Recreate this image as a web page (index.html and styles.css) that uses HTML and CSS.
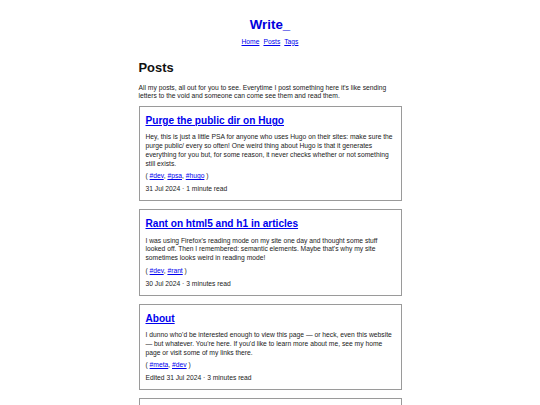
FILE: index.html
```html
<!DOCTYPE html>
<html lang="en">
<head>
<meta charset="utf-8">
<title>Write_</title>
<link rel="stylesheet" href="styles.css">
</head>
<body>
<header class="site-header">
  <a class="site-title" href="#">Write_</a>
  <nav class="site-nav">
    <a href="#">Home</a>
    <a href="#">Posts</a>
    <a href="#">Tags</a>
  </nav>
</header>
<main class="content">
  <h1 class="page-title">Posts</h1>
  <p class="intro">All my posts, all out for you to see. Everytime I post something here it's like sending letters to the void and someone can come see them and read them.</p>

  <article class="card">
    <h2 class="card-title"><a href="#">Purge the public dir on Hugo</a></h2>
    <p class="card-text">Hey, this is just a little PSA for anyone who uses Hugo on their sites: make sure the purge public/ every so often! One weird thing about Hugo is that it generates everything for you but, for some reason, it never checks whether or not something still exists.</p>
    <p class="card-tags">( <a href="#">#dev</a>, <a href="#">#psa</a>, <a href="#">#hugo</a> )</p>
    <p class="card-meta">31 Jul 2024 · 1 minute read</p>
  </article>

  <article class="card">
    <h2 class="card-title"><a href="#">Rant on html5 and h1 in articles</a></h2>
    <p class="card-text">I was using Firefox's reading mode on my site one day and thought some stuff looked off. Then I remembered: semantic elements. Maybe that's why my site sometimes looks weird in reading mode!</p>
    <p class="card-tags">( <a href="#">#dev</a>, <a href="#">#rant</a> )</p>
    <p class="card-meta">30 Jul 2024 · 3 minutes read</p>
  </article>

  <article class="card">
    <h2 class="card-title"><a href="#">About</a></h2>
    <p class="card-text">I dunno who'd be interested enough to view this page — or heck, even this website — but whatever. You're here. If you'd like to learn more about me, see my home page or visit some of my links there.</p>
    <p class="card-tags">( <a href="#">#meta</a>, <a href="#">#dev</a> )</p>
    <p class="card-meta">Edited 31 Jul 2024 · 3 minutes read</p>
  </article>

  <article class="card card-last"></article>
</main>
</body>
</html>
```

FILE: styles.css
```css
html, body {
  margin: 0;
  padding: 0;
  background: #ffffff;
}

body {
  font-family: "Liberation Sans", Arial, sans-serif;
  font-size: 6.72px;
  line-height: 8.7px;
  color: #222222;
}

a {
  color: #0000ee;
}

.site-header {
  display: flex;
  flex-direction: column;
  align-items: center;
  padding-top: 17px;
}

.site-title {
  font-size: 13.3px;
  line-height: 15px;
  font-weight: bold;
  text-decoration: none;
  color: #0000dd;
}

.site-nav {
  display: flex;
  gap: 4px;
  margin-top: 5.7px;
  line-height: 8px;
}

.content {
  width: 263px;
  margin: 0 auto;
}

.page-title {
  font-size: 12.9px;
  line-height: 15px;
  margin: 14.4px 0 8.6px;
  color: #111111;
}

.intro {
  margin: 0 0 5px;
}

.card {
  border: 1px solid #9a9a9a;
  padding: 8px 6px 6.4px;
  margin-bottom: 8px;
}

.card-last {
  height: 40px;
  padding: 0;
}

.card-title {
  font-size: 10.1px;
  line-height: 12px;
  margin: 0 0 6.4px;
}

.card-text {
  margin: 0;
}

.card-tags {
  margin: 4.1px 0 0;
}

.card-meta {
  margin: 4.1px 0 0;
}
```
